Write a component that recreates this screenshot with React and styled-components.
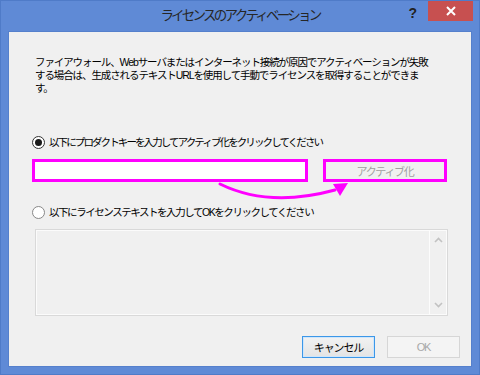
import React from "react";
import styled, { createGlobalStyle } from "styled-components";

const Global = createGlobalStyle`
  html, body { margin: 0; padding: 0; }
  body { width: 480px; height: 375px; overflow: hidden; background: #5f8ad6; }
`;

const FONT = `"Liberation Sans", "Noto Sans CJK JP", sans-serif`;

const Window = styled.div`
  position: relative;
  width: 480px;
  height: 375px;
  box-sizing: border-box;
  background: #5f8ad6;
  border: 1px solid #4f7bc8;
  display: flex;
  flex-direction: column;
  font-family: ${FONT};
`;

const TitleBar = styled.div`
  height: 30px;
  display: grid;
  grid-template-columns: 1fr auto 1fr;
  align-items: start;
`;

const Title = styled.div`
  grid-column: 2;
  margin-top: 6px;
  font-size: 13.5px;
  letter-spacing: -2.75px;
  color: #262626;
  line-height: 18px;
`;

const Controls = styled.div`
  grid-column: 3;
  justify-self: end;
  display: flex;
  align-items: flex-start;
  margin-right: 6px;
`;

const Help = styled.div`
  font-weight: bold;
  font-size: 14px;
  color: #222;
  margin-top: 4px;
  margin-right: 11px;
  line-height: 16px;
`;

const Close = styled.div`
  width: 45px;
  height: 20px;
  background: #c75050;
  display: flex;
  align-items: center;
  justify-content: center;
`;

const Client = styled.div`
  flex: 1;
  margin: 0 7px 7px 7px;
  background: #f0f0f0;
  border: 1px solid #5580cc;
  display: flex;
  flex-direction: column;
  padding: 24px 11px 0 23px;
  font-size: 10.5px;
  color: #000;
`;

const Description = styled.div`
  margin-left: 3px;
  display: flex;
  flex-direction: column;
`;

const Line = styled.div`
  height: 13px;
  line-height: 13px;
  letter-spacing: -1.1px;
  white-space: nowrap;
`;

const RadioRow = styled.div`
  display: flex;
  align-items: center;
  height: 14px;
  margin-top: ${(p) => p.$top}px;
`;

const RadioLabel = styled.span`
  font-size: 10.5px;
  line-height: 14px;
  letter-spacing: ${(p) => p.$spacing}px;
  white-space: nowrap;
`;

const RadioCircle = styled.span`
  width: 11px;
  height: 11px;
  border-radius: 50%;
  border: 1px solid ${(p) => (p.$checked ? "#333" : "#888")};
  background: #fff;
  display: flex;
  align-items: center;
  justify-content: center;
  margin-right: 4px;
  flex: none;
  &::after {
    content: "";
    width: 7px;
    height: 7px;
    border-radius: 50%;
    background: ${(p) => (p.$checked ? "#1a1a1a" : "transparent")};
  }
`;

const KeyRow = styled.div`
  display: flex;
  align-items: center;
  margin-top: 10px;
  height: 23px;
`;

const KeyInput = styled.div`
  width: 276px;
  height: 23px;
  box-sizing: border-box;
  border: 3px solid #ff00ff;
  background: #fff;
`;

const ActivateButton = styled.div`
  margin-left: 15px;
  width: 124px;
  height: 23px;
  box-sizing: border-box;
  border: 3px solid #ff00ff;
  background: #f0f0f0;
  color: #a0a0a0;
  display: flex;
  align-items: center;
  justify-content: center;
  letter-spacing: -1.3px;
  font-size: 11px;
`;

const TextArea = styled.div`
  margin-top: 10px;
  margin-left: 3px;
  width: 413px;
  height: 87px;
  box-sizing: border-box;
  border: 1px solid #d9d9d9;
  box-shadow: inset 0 0 0 1px #fbfbfb;
  background: #f0f0f0;
  display: flex;
  justify-content: flex-end;
`;

const ScrollBar = styled.div`
  width: 17px;
  border-left: 1px solid #fcfcfc;
  display: flex;
  flex-direction: column;
  justify-content: space-between;
  align-items: center;
  padding: 7px 0 7px;
`;

const Footer = styled.div`
  margin-top: 20px;
  display: flex;
  justify-content: flex-end;
  gap: 12px;
`;

const DialogButton = styled.div`
  width: 73px;
  height: 22px;
  box-sizing: border-box;
  display: flex;
  align-items: center;
  justify-content: center;
  font-size: 11px;
  letter-spacing: -1.1px;
  border: 1px solid ${(p) => (p.$primary ? "#3c97e8" : "#d6d6d6")};
  background: ${(p) =>
    p.$primary ? "linear-gradient(#f2f2f2, #e4e4e4)" : "#f4f4f4"};
  color: ${(p) => (p.$disabled ? "#a8a8a8" : "#000")};
  box-shadow: ${(p) => (p.$primary ? "inset 0 0 0 1px #cfe6fb" : "none")};
`;

const Overlay = styled.svg`
  position: absolute;
  left: 0;
  top: 0;
  pointer-events: none;
`;

const Chevron = ({ up }) => (
  <svg width="9" height="6" viewBox="0 0 9 6">
    <path
      d={up ? "M1 5 L4.5 1.5 L8 5" : "M1 1 L4.5 4.5 L8 1"}
      fill="none"
      stroke="#c2c2c2"
      strokeWidth="1.6"
    />
  </svg>
);

export default function App() {
  return (
    <>
      <Global />
      <Window>
        <TitleBar>
          <Title>ライセンスのアクティベーション</Title>
          <Controls>
            <Help>?</Help>
            <Close>
              <svg width="10" height="10" viewBox="0 0 10 10">
                <path d="M1 1 L9 9 M9 1 L1 9" stroke="#fff" strokeWidth="2" />
              </svg>
            </Close>
          </Controls>
        </TitleBar>
        <Client>
          <Description>
            <Line>ファイアウォール、Webサーバまたはインターネット接続が原因でアクティベーションが失敗</Line>
            <Line>する場合は、生成されるテキストURLを使用して手動でライセンスを取得することができま</Line>
            <Line>す。</Line>
          </Description>
          <RadioRow $top={40}>
            <RadioCircle $checked />
            <RadioLabel $spacing={-1.9}>以下にプロダクトキーを入力してアクティブ化をクリックしてください</RadioLabel>
          </RadioRow>
          <KeyRow>
            <KeyInput />
            <ActivateButton>アクティブ化</ActivateButton>
          </KeyRow>
          <RadioRow $top={23}>
            <RadioCircle />
            <RadioLabel $spacing={-1.45}>以下にライセンステキストを入力してOKをクリックしてください</RadioLabel>
          </RadioRow>
          <TextArea>
            <ScrollBar>
              <Chevron up />
              <Chevron />
            </ScrollBar>
          </TextArea>
          <Footer>
            <DialogButton $primary>キャンセル</DialogButton>
            <DialogButton $disabled>OK</DialogButton>
          </Footer>
        </Client>
        <Overlay width="480" height="375" viewBox="0 0 480 375">
          <path
            d="M219 183 Q 268 207 334 189"
            fill="none"
            stroke="#ff00ff"
            strokeWidth="3"
            strokeLinecap="round"
          />
          <polygon points="347,182 332,183 339,195" fill="#ff00ff" />
        </Overlay>
      </Window>
    </>
  );
}
